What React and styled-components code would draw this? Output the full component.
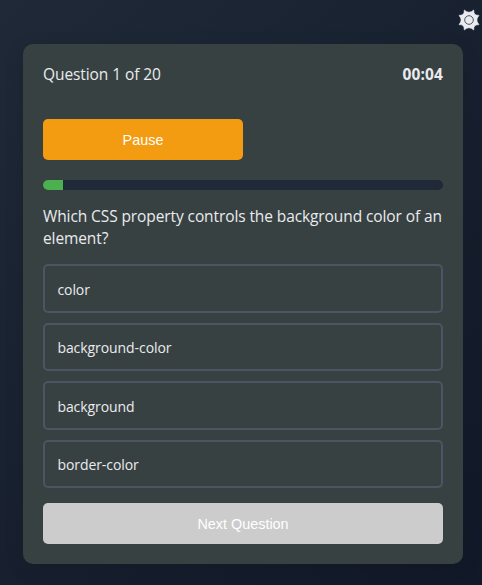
import React from "react";
import styled, { createGlobalStyle } from "styled-components";

const GlobalStyle = createGlobalStyle`
  * { box-sizing: border-box; }
  body {
    margin: 0;
    font-family: "Segoe UI", "Open Sans", "Noto Sans", sans-serif;
    color: #e9ebef;
  }
`;

const Page = styled.main`
  min-height: 100vh;
  padding: 44px 19px 21px 23px;
  background: linear-gradient(135deg, #1f2937, #111827);
`;

const ThemeToggle = styled.button`
  position: absolute;
  top: 9px;
  right: 2px;
  width: 22px;
  height: 22px;
  padding: 0;
  border: 0;
  background: none;
  svg { display: block; }
`;

const Card = styled.section`
  height: 520px;
  padding: 20px;
  border-radius: 10px;
  background: #384141;
  box-shadow: 0 4px 20px rgba(0, 0, 0, 0.1);
`;

const Header = styled.header`
  display: flex;
  justify-content: space-between;
  height: 55px;
  font-size: 15.5px;
  line-height: 20px;
`;

const Counter = styled.span`
  letter-spacing: -0.08px;
`;

const Timer = styled.strong`
  font-weight: 700;
  letter-spacing: 0.15px;
`;

const Button = styled.button`
  display: block;
  width: ${({ $wide }) => ($wide ? "100%" : "200px")};
  height: 41px;
  padding: ${({ $wide }) => ($wide ? "1px 0 0" : "0")};
  border: 0;
  border-radius: 5px;
  background: ${({ $wide }) => ($wide ? "#cccccc" : "#f39c12")};
  color: #fff;
  font: 14.4px/40px "Liberation Sans", Arial, sans-serif;
`;

const Track = styled.div`
  height: 10px;
  margin: 20px 0 15px;
  overflow: hidden;
  border-radius: 5px;
  background: #1f2937;
`;

const Progress = styled.div`
  width: 5%;
  height: 100%;
  background: #4caf50;
`;

const Question = styled.p`
  margin: 0 0 15px;
  font-size: 15.5px;
  line-height: 22px;
  letter-spacing: -0.1px;
  white-space: nowrap;
`;

const Options = styled.ul`
  display: grid;
  gap: 10px;
  margin: 0 0 15px;
  padding: 0;
  list-style: none;
`;

const Option = styled.li`
  height: 48.5px;
  padding: 1.5px 12.4px 0;
  border: 2px solid #4b5563;
  border-radius: 5px;
  font-size: 14px;
  line-height: 44px;
  letter-spacing: -0.07px;
`;

const options = ["color", "background-color", "background", "border-color"];

const SunIcon = () => (
  <svg width="22" height="22" viewBox="-11 -11 22 22" aria-hidden="true">
    <path
      d="M-4.7-10Q-2.4-7.8 0-7.8T4.7-10Q4.8-6.9 5.8-5.8T10-4.6Q7.9-2.2 7.9 0T10 4.6Q6.9 4.8 5.8 5.8T4.7 10Q2.4 7.8 0 7.8T-4.7 10Q-4.8 6.9-5.8 5.8T-10 4.6Q-7.9 2.2-7.9 0T-10-4.6Q-6.9-4.8-5.8-5.8T-4.7-10Z"
      fill="#e9ebef"
      stroke="#e9ebef"
      strokeWidth="0.6"
      strokeLinejoin="round"
    />
    <circle r="4.3" fill="none" stroke="#4b5563" strokeWidth="1" />
  </svg>
);

export default function App() {
  return (
    <Page>
      <GlobalStyle />
      <ThemeToggle aria-label="Toggle theme"><SunIcon /></ThemeToggle>
      <Card>
        <Header>
          <Counter>Question 1 of 20</Counter>
          <Timer>00:04</Timer>
        </Header>
        <Button>Pause</Button>
        <Track><Progress /></Track>
        <Question>Which CSS property controls the background color of an<br />element?</Question>
        <Options>
          {options.map((option) => <Option key={option}>{option}</Option>)}
        </Options>
        <Button $wide disabled>Next Question</Button>
      </Card>
    </Page>
  );
}
